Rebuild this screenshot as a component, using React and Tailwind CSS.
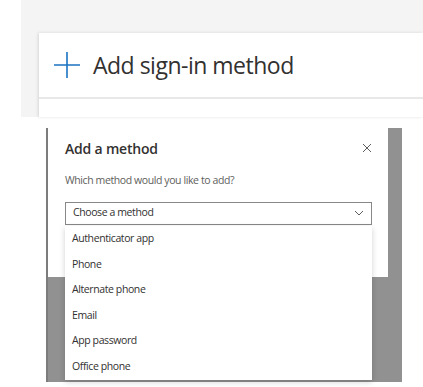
import React from "react";

const methods = [
  "Authenticator app",
  "Phone",
  "Alternate phone",
  "Email",
  "App password",
  "Office phone",
];

export default function App() {
  return (
    <div className="w-[423px] h-[387px] bg-white overflow-hidden font-['Open_Sans',sans-serif] text-[#323130]">
      {/* Top: security info page */}
      <div className="ml-[21px] h-[117px] bg-[#f4f4f4] pt-[33px] pl-[18px]">
        <div className="h-[84px] bg-white shadow-[-1px_0_3px_rgba(0,0,0,0.12)]">
          <div className="h-[66px] border-b-2 border-[#e8e8e8] flex items-center pl-[14px] gap-[12px]">
            <svg width="28" height="28" viewBox="0 0 28 28">
              <path d="M14 1v26M1 14h26" stroke="#1a73c2" strokeWidth="1.6" fill="none" />
            </svg>
            <span className="text-[23px] leading-none tracking-[-0.5px]">Add sign-in method</span>
          </div>
        </div>
      </div>

      {/* Bottom: add method dialog */}
      <div className="mt-[11px] ml-[46px] w-[356px] h-[254px] bg-[#919191] border-l-2 border-[#7c7c7c] relative">
        <div className="w-[340px] h-[149px] bg-white pl-[17px] pr-[16px] pt-[10px]">
          <div className="flex items-center justify-between h-[20px]">
            <span className="text-[14px] font-semibold tracking-[-0.2px]">Add a method</span>
            <svg width="10" height="10" viewBox="0 0 10 10">
              <path d="M1 1l8 8M9 1l-8 8" stroke="#605e5c" strokeWidth="1" fill="none" />
            </svg>
          </div>
          <div className="mt-[15px] text-[10.5px] tracking-[-0.4px] text-[#605e5c]">
            Which method would you like to add?
          </div>
          <div className="mt-[13px] h-[23px] border border-[#8a8886] flex items-center justify-between px-[7px] text-[10.5px] tracking-[-0.4px]">
            <span>Choose a method</span>
            <svg width="10" height="6" viewBox="0 0 10 6">
              <path d="M1 1l4 4 4-4" stroke="#605e5c" strokeWidth="1" fill="none" />
            </svg>
          </div>
        </div>
        <div className="absolute left-[17px] top-[98px] w-[307px] bg-white shadow-[0_2px_6px_rgba(0,0,0,0.18)]">
          {methods.map((m) => (
            <div key={m} className="h-[25.6px] flex items-center px-[7px] text-[10.5px] tracking-[-0.4px]">
              {m}
            </div>
          ))}
        </div>
      </div>
    </div>
  );
}
